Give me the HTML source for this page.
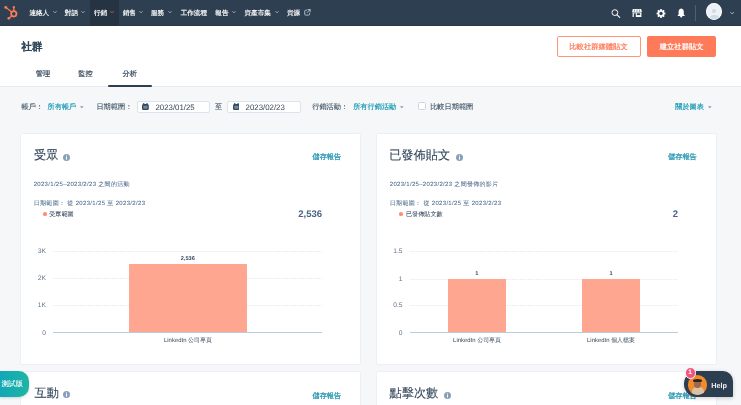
<!DOCTYPE html>
<html><head><meta charset="utf-8">
<style>
*{box-sizing:border-box;margin:0;padding:0}
html,body{width:741px;height:405px;overflow:hidden}
body{position:relative;background:#f5f7f9;font-family:"Liberation Sans",sans-serif;color:#33475b}
#root{position:absolute;left:0;top:0;width:741px;height:405px;will-change:transform}
.tx{position:absolute;white-space:nowrap;line-height:1;text-rendering:geometricPrecision;-webkit-text-stroke-width:0.12px}
.abs{position:absolute}
.chev{position:absolute;width:4px;height:4px}
.card{position:absolute;background:#fff;border-radius:1px;box-shadow:0 0 0 0.5px rgba(223,227,235,.7),0 0 2px rgba(45,62,80,.06)}
.info{position:absolute;width:7px;height:7px}
.grid{position:absolute;height:0.8px;background-image:linear-gradient(90deg,#e2e8ee 50%,transparent 50%);background-size:1.6px 1px;background-repeat:repeat-x}
.axis{position:absolute;height:0.9px;background:#bccbdc}
.bar{position:absolute;background:#fea68f}
.inp{position:absolute;top:101px;height:12.4px;background:#fff;border:0.7px solid #dbe3ec;border-radius:2px}
.caret{position:absolute;width:4px;height:3px}
</style></head><body><div id="root">
<div class="abs" style="left:0;top:0;width:741px;height:25.6px;background:#2e3f51;box-shadow:inset 0 -1px 0 rgba(0,0,0,.12)"></div>
<div class="abs" style="left:89.7px;top:0;width:29.2px;height:25.6px;background:#253342"></div>
<svg class="abs" style="left:4px;top:5px" width="15" height="15" viewBox="0 0 15 15">
  <g fill="none" stroke="#ff7a59" stroke-linecap="round">
    <circle cx="9.8" cy="8.8" r="2.7" stroke-width="1.75"/>
    <line x1="9.8" y1="6" x2="9.8" y2="2.4" stroke-width="1.3"/>
    <line x1="7.8" y1="7" x2="2" y2="2.6" stroke-width="1.2"/>
    <line x1="7.9" y1="10.8" x2="5" y2="13.2" stroke-width="1.2"/>
  </g>
  <g fill="#ff7a59">
    <circle cx="9.8" cy="2.2" r="1.15"/>
    <circle cx="1.8" cy="2.4" r="1.45"/>
    <circle cx="4.8" cy="13.3" r="1.35"/>
  </g>
</svg>
<svg class="chev" style="left:52.5px;top:10.3px" viewBox="0 0 4 4"><path d="M0.4 1.2 L2 2.8 L3.6 1.2" fill="none" stroke="#cbd6e2" stroke-width="0.7"/></svg>
<svg class="chev" style="left:80.8px;top:10.3px" viewBox="0 0 4 4"><path d="M0.4 1.2 L2 2.8 L3.6 1.2" fill="none" stroke="#cbd6e2" stroke-width="0.7"/></svg>
<svg class="chev" style="left:109.8px;top:10.3px" viewBox="0 0 4 4"><path d="M0.4 1.2 L2 2.8 L3.6 1.2" fill="none" stroke="#ff7a59" stroke-width="0.7"/></svg>
<svg class="chev" style="left:139px;top:10.3px" viewBox="0 0 4 4"><path d="M0.4 1.2 L2 2.8 L3.6 1.2" fill="none" stroke="#cbd6e2" stroke-width="0.7"/></svg>
<svg class="chev" style="left:168px;top:10.3px" viewBox="0 0 4 4"><path d="M0.4 1.2 L2 2.8 L3.6 1.2" fill="none" stroke="#cbd6e2" stroke-width="0.7"/></svg>
<svg class="chev" style="left:232px;top:10.3px" viewBox="0 0 4 4"><path d="M0.4 1.2 L2 2.8 L3.6 1.2" fill="none" stroke="#cbd6e2" stroke-width="0.7"/></svg>
<svg class="chev" style="left:275px;top:10.3px" viewBox="0 0 4 4"><path d="M0.4 1.2 L2 2.8 L3.6 1.2" fill="none" stroke="#cbd6e2" stroke-width="0.7"/></svg>
<svg class="abs" style="left:304.4px;top:8.9px" width="7" height="7" viewBox="0 0 7 7"><g fill="none" stroke="#e6ebf1" stroke-width="0.7" stroke-linecap="round"><path d="M2.6 1.2 H1.6 Q0.7 1.2 0.7 2.1 V5.2 Q0.7 6.1 1.6 6.1 H4.7 Q5.6 6.1 5.6 5.2 V4.3"/><path d="M3.9 0.6 H6.1 V2.8 M6.1 0.6 L3.1 3.6"/></g></svg>
<svg class="abs" style="left:611px;top:8.5px" width="10" height="9" viewBox="0 0 10 9"><circle cx="3.9" cy="3.6" r="2.9" fill="none" stroke="#fff" stroke-width="0.95"/><line x1="6" y1="5.8" x2="8.7" y2="8.4" stroke="#fff" stroke-width="1.1" stroke-linecap="round"/></svg>
<svg class="abs" style="left:632px;top:9px" width="10" height="8" viewBox="0 0 10 8"><g fill="#fff"><path d="M0.8 0 H9.2 L9.9 2.9 H0.1 Z"/><rect x="0.6" y="2.6" width="8.8" height="5.4"/></g><g fill="#2e3f51"><path d="M2.6 0.5 L2.3 2.5 H2.9 L3.1 0.5Z"/><path d="M4.7 0.5 V2.5 H5.3 V0.5Z"/><path d="M6.9 0.5 L7.1 2.5 H7.7 L7.4 0.5Z"/><rect x="0.6" y="2.9" width="8.8" height="0.5"/><rect x="1.8" y="4.3" width="2" height="3.7"/><rect x="4.8" y="4.3" width="3.3" height="1.8"/></g></svg>
<svg class="abs" style="left:655.5px;top:9px" width="10" height="9" viewBox="0 0 10 9"><g transform="translate(5 4.5)"><g fill="#fff"><circle r="3.3"/><rect x="-0.9" y="-4.4" width="1.8" height="8.8"/><rect x="-4.4" y="-0.9" width="8.8" height="1.8"/><rect x="-0.9" y="-4.4" width="1.8" height="8.8" transform="rotate(45)"/><rect x="-0.9" y="-4.4" width="1.8" height="8.8" transform="rotate(-45)"/></g><circle r="1.7" fill="#2e3f51"/></g></svg>
<svg class="abs" style="left:676.5px;top:8.2px" width="9" height="10" viewBox="0 0 9 10"><g fill="#fff"><path d="M4.2 0.4 C2.2 0.6 1.6 2.2 1.6 4 V6.4 L0.3 8.1 H8.1 L6.8 6.4 V4 C6.8 2.2 6.2 0.6 4.2 0.4Z"/><circle cx="4.2" cy="8.5" r="1.1"/></g></svg>
<div class="abs" style="left:694.9px;top:5.2px;width:0.6px;height:15.8px;background:#4d6077"></div>
<div class="abs" style="left:705.8px;top:3.4px;width:16.6px;height:16.9px;border-radius:50%;background:#eef2f6;border:0.8px solid #fff;overflow:hidden">
  <div class="abs" style="left:5.5px;top:4.8px;width:4.2px;height:4.2px;border-radius:50%;background:#cfdbe6"></div>
  <div class="abs" style="left:3.7px;top:10.6px;width:8.2px;height:6px;border-radius:50% 50% 0 0;background:#cfdbe6"></div>
</div>
<svg class="chev" style="left:730px;top:11.2px" viewBox="0 0 4 4"><path d="M0.5 1.2 L2.2 2.9 L3.9 1.2" fill="none" stroke="#cbd6e2" stroke-width="0.85"/></svg>

<!-- header -->
<div class="abs" style="left:0;top:25.6px;width:741px;height:61.4px;background:#fff;border-bottom:1.2px solid #e5eaf0"></div>
<div class="abs" style="left:108px;top:84.5px;width:43.7px;height:2.5px;border-radius:2px;background:#2d3e50"></div>
<div class="abs" style="left:556.5px;top:36px;width:84px;height:20.5px;border:0.6px solid #ff9478;border-radius:2px;background:#fff"></div>
<div class="abs" style="left:647px;top:36px;width:69px;height:20.5px;border-radius:2px;background:#ff7a59"></div>

<!-- filters -->
<svg class="caret" style="left:79.7px;top:105.6px" viewBox="0 0 4 3"><path d="M0 0.2 H3.6 L1.8 2.2Z" fill="#7c98b6"/></svg>
<div class="inp" style="left:137px;width:73px"></div>
<svg class="abs" style="left:142.3px;top:103.1px" width="6.8" height="7" viewBox="0 0 6.8 7"><g fill="#33475b"><rect x="0" y="0.9" width="6.8" height="6.1" rx="1.6"/><rect x="1.2" y="0" width="1.1" height="2"/><rect x="4.5" y="0" width="1.1" height="2"/></g><rect x="1.3" y="2.7" width="4.2" height="3" fill="#7088a4" rx="0.4"/></svg>
<div class="inp" style="left:227.3px;width:73.3px"></div>
<svg class="abs" style="left:232.7px;top:103.1px" width="6.8" height="7" viewBox="0 0 6.8 7"><g fill="#33475b"><rect x="0" y="0.9" width="6.8" height="6.1" rx="1.6"/><rect x="1.2" y="0" width="1.1" height="2"/><rect x="4.5" y="0" width="1.1" height="2"/></g><rect x="1.3" y="2.7" width="4.2" height="3" fill="#7088a4" rx="0.4"/></svg>
<svg class="caret" style="left:400px;top:105.6px" viewBox="0 0 4 3"><path d="M0 0.2 H3.6 L1.8 2.2Z" fill="#7c98b6"/></svg>
<div class="abs" style="left:417.8px;top:102.1px;width:7.8px;height:7.6px;border:0.8px solid #cbd6e2;border-radius:1.5px;background:#fff"></div>
<svg class="caret" style="left:708px;top:105.6px" viewBox="0 0 4 3"><path d="M0 0.2 H3.6 L1.8 2.2Z" fill="#7c98b6"/></svg>

<!-- cards -->
<div class="card" style="left:21px;top:133.8px;width:339.2px;height:230.4px"></div>
<div class="card" style="left:376.8px;top:133.8px;width:339px;height:230.4px"></div>
<div class="card" style="left:21px;top:371.6px;width:339.2px;height:60px"></div>
<div class="card" style="left:376.8px;top:371.5px;width:339px;height:60px"></div>

<svg class="info" style="left:63.2px;top:153.6px" viewBox="0 0 7 7"><circle cx="3.5" cy="3.5" r="3.5" fill="#88a0ba"/><rect x="3" y="3" width="1" height="2.6" fill="#fff"/><circle cx="3.5" cy="1.9" r="0.55" fill="#fff"/></svg>
<svg class="info" style="left:456.2px;top:153.8px" viewBox="0 0 7 7"><circle cx="3.5" cy="3.5" r="3.5" fill="#88a0ba"/><rect x="3" y="3" width="1" height="2.6" fill="#fff"/><circle cx="3.5" cy="1.9" r="0.55" fill="#fff"/></svg>
<svg class="info" style="left:63.3px;top:391.4px" viewBox="0 0 7 7"><circle cx="3.5" cy="3.5" r="3.5" fill="#88a0ba"/><rect x="3" y="3" width="1" height="2.6" fill="#fff"/><circle cx="3.5" cy="1.9" r="0.55" fill="#fff"/></svg>
<svg class="info" style="left:443.9px;top:391.8px" viewBox="0 0 7 7"><circle cx="3.5" cy="3.5" r="3.5" fill="#88a0ba"/><rect x="3" y="3" width="1" height="2.6" fill="#fff"/><circle cx="3.5" cy="1.9" r="0.55" fill="#fff"/></svg>

<div class="abs" style="left:43px;top:211.9px;width:3.7px;height:3.7px;border-radius:50%;background:#ff8f73"></div>
<div class="abs" style="left:398.9px;top:211.9px;width:3.7px;height:3.7px;border-radius:50%;background:#ff8f73"></div>

<div class="grid" style="left:53px;top:251px;width:269px"></div>
<div class="grid" style="left:53px;top:278px;width:269px"></div>
<div class="grid" style="left:53px;top:305px;width:269px"></div>
<div class="bar" style="left:129.1px;top:264.3px;width:117.6px;height:67.7px"></div>
<div class="axis" style="left:53px;top:331.6px;width:269px"></div>

<div class="grid" style="left:410px;top:251px;width:268px"></div>
<div class="grid" style="left:410px;top:278.5px;width:268px"></div>
<div class="grid" style="left:410px;top:305px;width:268px"></div>
<div class="bar" style="left:447.9px;top:278.9px;width:57.9px;height:53.1px"></div>
<div class="bar" style="left:581.7px;top:278.9px;width:58.5px;height:53.1px"></div>
<div class="axis" style="left:410px;top:331.8px;width:268px"></div>

<!-- beta badge -->
<div class="abs" style="left:0;top:371px;width:28.6px;height:25.5px;border-radius:0 10px 10px 0;background:linear-gradient(90deg,#12a7b6,#1fb5a4);box-shadow:0 1px 3px rgba(0,0,0,.15)"></div>

<!-- help widget -->
<div class="abs" style="z-index:5;left:684px;top:371.3px;width:48.9px;height:25.5px;background:#2d3e50;border-radius:12.75px 10px 1px 12.75px;box-shadow:0 1px 4px rgba(0,0,0,.2)"></div>
<div class="abs" style="z-index:5;left:687.7px;top:375px;width:19.8px;height:19.8px;border-radius:50%;background:#f28a2e;overflow:hidden">
  <div class="abs" style="left:4.5px;top:12px;width:12px;height:10px;border-radius:45% 45% 0 0;background:#d9c2a6"></div>
  <div class="abs" style="left:6.2px;top:4.5px;width:7.4px;height:8.5px;border-radius:45%;background:#9a6a4e"></div>
  <div class="abs" style="left:5.8px;top:3.6px;width:8.2px;height:3.6px;border-radius:50% 50% 20% 20%;background:#2e241f"></div>
</div>
<div class="abs" style="z-index:5;left:684.6px;top:367.4px;width:11.4px;height:11.4px;border-radius:50%;background:#f2547d;border:1px solid #fff"></div>
<div class="tx" id="n1" style="left:29.42px;top:10.60px;font-size:6.60px;color:#fff;-webkit-text-stroke-width:0.18px;">連絡人</div>
<div class="tx" id="n2" style="left:64.86px;top:10.60px;font-size:6.60px;color:#fff;-webkit-text-stroke-width:0.18px;">對話</div>
<div class="tx" id="n3" style="left:94.00px;top:10.60px;font-size:6.60px;color:#fff;-webkit-text-stroke-width:0.18px;">行銷</div>
<div class="tx" id="n4" style="left:122.64px;top:10.60px;font-size:6.60px;color:#fff;-webkit-text-stroke-width:0.18px;">銷售</div>
<div class="tx" id="n5" style="left:151.00px;top:10.60px;font-size:6.60px;color:#fff;-webkit-text-stroke-width:0.18px;">服務</div>
<div class="tx" id="n6" style="left:180.64px;top:10.60px;font-size:6.60px;color:#fff;-webkit-text-stroke-width:0.18px;">工作流程</div>
<div class="tx" id="n7" style="left:215.36px;top:10.60px;font-size:6.60px;color:#fff;-webkit-text-stroke-width:0.18px;">報告</div>
<div class="tx" id="n8" style="left:244.50px;top:10.60px;font-size:6.60px;color:#fff;-webkit-text-stroke-width:0.18px;">資產市集</div>
<div class="tx" id="n9" style="left:287.00px;top:10.60px;font-size:6.60px;color:#fff;-webkit-text-stroke-width:0.18px;">資源</div>
<div class="tx" id="h1" style="left:21.56px;top:43.36px;font-size:10.39px;font-weight:bold;">社群</div>
<div class="tx" id="tb1" style="left:35.78px;top:70.10px;font-size:7.20px;-webkit-text-stroke-width:0.2px;">管理</div>
<div class="tx" id="tb2" style="left:78.24px;top:70.10px;font-size:7.20px;-webkit-text-stroke-width:0.2px;">監控</div>
<div class="tx" id="tb3" style="left:122.56px;top:70.10px;font-size:7.20px;-webkit-text-stroke-width:0.2px;">分析</div>
<div class="tx" id="bt1" style="left:569.30px;top:43.00px;font-size:7.30px;color:#ff7a59;-webkit-text-stroke-width:0.22px;">比較社群媒體貼文</div>
<div class="tx" id="bt2" style="left:659.74px;top:43.00px;font-size:7.30px;color:#fff;-webkit-text-stroke-width:0.22px;">建立社群貼文</div>
<div class="tx" id="f1" style="left:21.50px;top:103.20px;font-size:7.20px;color:#45586c;">帳戶：</div>
<div class="tx" id="f2" style="left:47.56px;top:103.20px;font-size:7.20px;color:#0091ae;">所有帳戶</div>
<div class="tx" id="f3" style="left:96.42px;top:103.20px;font-size:7.20px;color:#45586c;">日期範圍：</div>
<div class="tx" id="d1" style="left:155.44px;top:104.30px;font-size:7.85px;color:#33475b;-webkit-text-stroke-width:0;">2023/01/25</div>
<div class="tx" id="f4" style="left:215.06px;top:103.20px;font-size:7.20px;color:#45586c;">至</div>
<div class="tx" id="d2" style="left:245.56px;top:104.30px;font-size:7.85px;color:#33475b;-webkit-text-stroke-width:0;">2023/02/23</div>
<div class="tx" id="f5" style="left:312.24px;top:103.20px;font-size:7.20px;color:#45586c;">行銷活動：</div>
<div class="tx" id="f6" style="left:353.18px;top:103.20px;font-size:7.20px;color:#0091ae;">所有行銷活動</div>
<div class="tx" id="f7" style="left:430.18px;top:103.20px;font-size:7.20px;color:#45586c;">比較日期範圍</div>
<div class="tx" id="f8" style="left:675.24px;top:103.20px;font-size:7.20px;color:#0091ae;">關於圖表</div>
<div class="tx" id="c1t" style="left:34.00px;top:149.30px;font-size:12.20px;">受眾</div>
<div class="tx" id="c1s" style="left:312.44px;top:153.40px;font-size:7.20px;color:#2597b3;-webkit-text-stroke-width:0.28px;">儲存報告</div>
<div class="tx" id="c1a" style="left:33.68px;top:182.20px;font-size:6.00px;color:#516f90;letter-spacing:0.31px;-webkit-text-stroke-width:0.06px;">2023/1/25–2023/2/23 之間的活動</div>
<div class="tx" id="c1b" style="left:33.68px;top:201.40px;font-size:6.00px;color:#516f90;letter-spacing:0.33px;-webkit-text-stroke-width:0.06px;">日期範圍： 從 2023/1/25 至 2023/2/23</div>
<div class="tx" id="c1c" style="left:49.24px;top:211.50px;font-size:6.10px;-webkit-text-stroke-width:0.05px;">受眾範圍</div>
<div class="tx" id="c1n" style="left:298.18px;top:210.30px;font-size:9.57px;font-weight:bold;color:#4b6384;-webkit-text-stroke-width:0;">2,536</div>
<div class="tx" id="y1a" style="left:25.90px;top:249.38px;font-size:6.70px;color:#5f7590;-webkit-text-stroke-width:0;width:20px;text-align:right;">3K</div>
<div class="tx" id="y1b" style="left:25.90px;top:276.38px;font-size:6.70px;color:#5f7590;-webkit-text-stroke-width:0;width:20px;text-align:right;">2K</div>
<div class="tx" id="y1c" style="left:25.90px;top:303.38px;font-size:6.70px;color:#5f7590;-webkit-text-stroke-width:0;width:20px;text-align:right;">1K</div>
<div class="tx" id="y1d" style="left:25.90px;top:330.52px;font-size:6.70px;color:#5f7590;-webkit-text-stroke-width:0;width:20px;text-align:right;">0</div>
<div class="tx" id="bl1" style="left:180.76px;top:257.20px;font-size:5.60px;font-weight:bold;-webkit-text-stroke-width:0;">2,536</div>
<div class="tx" id="xl1" style="left:164.00px;top:339.30px;font-size:5.95px;-webkit-text-stroke-width:0;">LinkedIn 公司專頁</div>
<div class="tx" id="c2t" style="left:389.16px;top:149.30px;font-size:12.20px;">已發佈貼文</div>
<div class="tx" id="c2s" style="left:668.00px;top:153.40px;font-size:7.20px;color:#2597b3;-webkit-text-stroke-width:0.28px;">儲存報告</div>
<div class="tx" id="c2a" style="left:389.74px;top:182.20px;font-size:6.00px;color:#516f90;letter-spacing:0.31px;-webkit-text-stroke-width:0.06px;">2023/1/25–2023/2/23 之間發佈的影片</div>
<div class="tx" id="c2b" style="left:389.74px;top:201.40px;font-size:6.00px;color:#516f90;letter-spacing:0.33px;-webkit-text-stroke-width:0.06px;">日期範圍： 從 2023/1/25 至 2023/2/23</div>
<div class="tx" id="c2c" style="left:406.00px;top:211.50px;font-size:6.10px;-webkit-text-stroke-width:0.05px;">已發佈貼文數</div>
<div class="tx" id="c2n" style="left:672.70px;top:210.30px;font-size:9.50px;font-weight:bold;color:#4b6384;-webkit-text-stroke-width:0;">2</div>
<div class="tx" id="y2a" style="left:382.60px;top:249.38px;font-size:6.70px;color:#5f7590;-webkit-text-stroke-width:0;width:20px;text-align:right;">1.5</div>
<div class="tx" id="y2b" style="left:382.60px;top:276.90px;font-size:6.70px;color:#5f7590;-webkit-text-stroke-width:0;width:20px;text-align:right;">1</div>
<div class="tx" id="y2c" style="left:382.60px;top:303.40px;font-size:6.70px;color:#5f7590;-webkit-text-stroke-width:0;width:20px;text-align:right;">0.5</div>
<div class="tx" id="y2d" style="left:382.60px;top:330.50px;font-size:6.70px;color:#5f7590;-webkit-text-stroke-width:0;width:20px;text-align:right;">0</div>
<div class="tx" id="bl2" style="left:475.18px;top:271.60px;font-size:5.60px;font-weight:bold;-webkit-text-stroke-width:0;">1</div>
<div class="tx" id="bl3" style="left:609.50px;top:271.60px;font-size:5.60px;font-weight:bold;-webkit-text-stroke-width:0;">1</div>
<div class="tx" id="xl2" style="left:453.12px;top:339.30px;font-size:5.95px;-webkit-text-stroke-width:0;">LinkedIn 公司專頁</div>
<div class="tx" id="xl3" style="left:587.06px;top:339.30px;font-size:5.95px;-webkit-text-stroke-width:0;">LinkedIn 個人檔案</div>
<div class="tx" id="c3t" style="left:34.56px;top:386.90px;font-size:12.20px;">互動</div>
<div class="tx" id="c3s" style="left:312.44px;top:391.60px;font-size:7.20px;color:#2597b3;-webkit-text-stroke-width:0.28px;">儲存報告</div>
<div class="tx" id="c4t" style="left:389.50px;top:386.90px;font-size:12.20px;">點擊次數</div>
<div class="tx" id="c4s" style="left:668.00px;top:391.60px;font-size:7.20px;color:#2597b3;-webkit-text-stroke-width:0.28px;">儲存報告</div>
<div class="tx" id="beta" style="left:1.48px;top:381.00px;font-size:7.10px;color:#fff;-webkit-text-stroke-width:0.1px;">測試版</div>
<div class="tx" id="hb1" style="left:688.30px;top:369.50px;font-size:6.50px;font-weight:bold;color:#fff;z-index:6;-webkit-text-stroke-width:0;">1</div>
<div class="tx" id="help" style="left:711.28px;top:381.84px;font-size:7.29px;font-weight:bold;color:#eef1f4;z-index:6;-webkit-text-stroke-width:0;">Help</div>
</div></body></html>
